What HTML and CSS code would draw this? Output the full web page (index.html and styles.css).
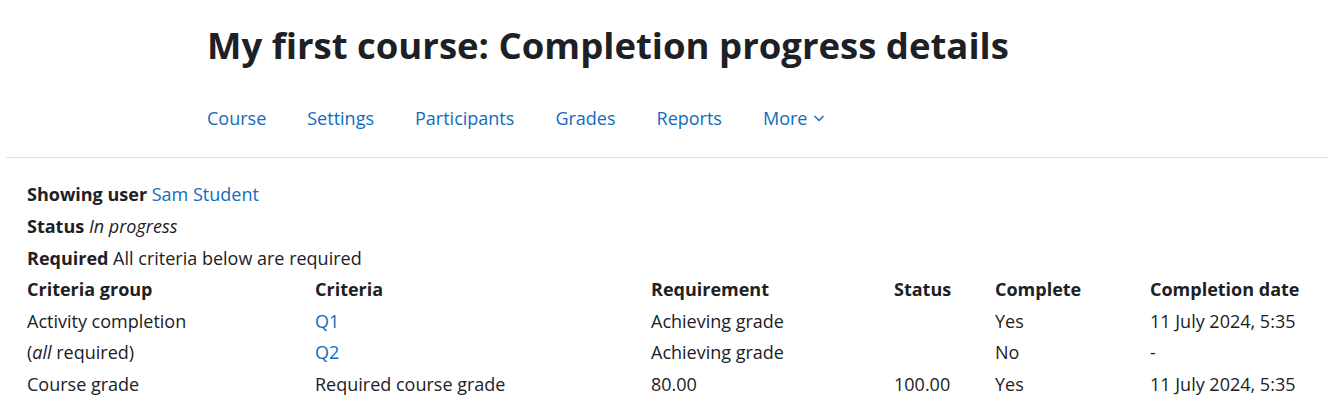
FILE: index.html
```html
<!DOCTYPE html>
<html lang="en">
<head>
    <meta charset="UTF-8">
    <meta name="viewport" content="width=device-width, initial-scale=1.0">
    <title>My first course: Completion progress details</title>
    <link rel="stylesheet" href="styles.css">
</head>
<body>
    <div class="page-header">
        <h1>My first course: Completion progress details</h1>
        <ul class="course-nav">
            <li><a href="#">Course</a></li>
            <li><a href="#">Settings</a></li>
            <li><a href="#">Participants</a></li>
            <li><a href="#">Grades</a></li>
            <li><a href="#">Reports</a></li>
            <li><a href="#" class="more">More
                <svg width="12" height="12" viewBox="0 0 12 12"><path d="M1.5 4 L6 8.5 L10.5 4" fill="none" stroke="currentColor" stroke-width="1.5"/></svg>
            </a></li>
        </ul>
    </div>

    <div class="main">
        <p class="info"><b>Showing user</b> <a href="#">Sam Student</a></p>
        <p class="info"><b>Status</b> <i>In progress</i></p>
        <p class="info"><b>Required</b> All criteria below are required</p>

        <table class="criteria">
            <colgroup>
                <col class="c1"><col class="c2"><col class="c3"><col class="c4"><col class="c5"><col class="c6">
            </colgroup>
            <thead>
                <tr>
                    <th>Criteria group</th>
                    <th>Criteria</th>
                    <th>Requirement</th>
                    <th>Status</th>
                    <th>Complete</th>
                    <th>Completion date</th>
                </tr>
            </thead>
            <tbody>
                <tr>
                    <td>Activity completion</td>
                    <td><a href="#">Q1</a></td>
                    <td>Achieving grade</td>
                    <td></td>
                    <td>Yes</td>
                    <td>11 July 2024, 5:35</td>
                </tr>
                <tr>
                    <td>(<i>all</i> required)</td>
                    <td><a href="#">Q2</a></td>
                    <td>Achieving grade</td>
                    <td></td>
                    <td>No</td>
                    <td>-</td>
                </tr>
                <tr>
                    <td>Course grade</td>
                    <td>Required course grade</td>
                    <td>80.00</td>
                    <td>100.00</td>
                    <td>Yes</td>
                    <td>11 July 2024, 5:35</td>
                </tr>
            </tbody>
        </table>
    </div>
</body>
</html>
```

FILE: styles.css
```css
body {
    margin: 0;
    font-family: "Open Sans", "Noto Sans", sans-serif;
    font-size: 18px;
    color: #1d2125;
    background: #fff;
}
a {
    color: #0f6cbf;
    text-decoration: none;
}
.page-header {
    margin-left: 6px;
    padding: 18px 0 0 201px;
    border-bottom: 1px solid #dee2e6;
}
h1 {
    margin: 0;
    font-size: 36.5px;
    font-weight: 700;
    line-height: 54px;
}
.course-nav {
    list-style: none;
    margin: 0;
    padding: 32px 0 25px 0;
    display: flex;
    gap: 41px;
}
.course-nav a {
    display: flex;
    align-items: center;
    gap: 6px;
    line-height: 28px;
}
.main {
    padding: 20px 27px 0 27px;
}
.info {
    margin: 0;
    line-height: 32px;
}
.criteria {
    border-collapse: collapse;
    text-align: left;
}
.criteria th, .criteria td {
    padding: 0;
    line-height: 31.5px;
    vertical-align: top;
}
.c1 { width: 288px; }
.c2 { width: 336px; }
.c3 { width: 243px; }
.c4 { width: 101px; }
.c5 { width: 155px; }
```
